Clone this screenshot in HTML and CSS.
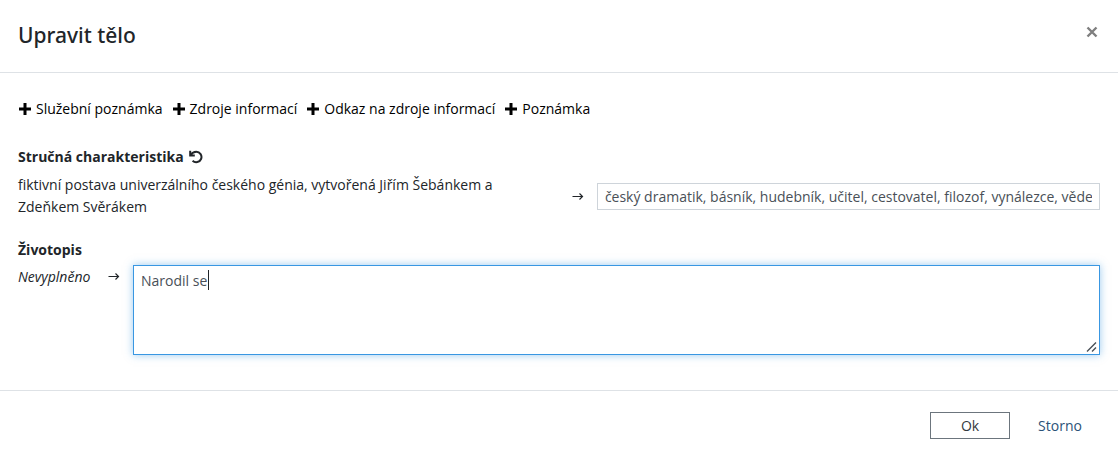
FILE: index.html
```html
<!DOCTYPE html>
<html lang="cs">
<head>
    <meta charset="UTF-8">
    <meta name="viewport" content="width=device-width, initial-scale=1.0">
    <title>Upravit tělo</title>
    <link rel="stylesheet" href="styles.css">
</head>
<body>
    <form class="dialog">
        <header class="dialog-header">
            <h1>Upravit tělo</h1>
            <button type="button" class="close" aria-label="Zavřít">
                <svg viewBox="0 0 12 12"><path d="M1.5 1.5l9 9M10.5 1.5l-9 9"/></svg>
            </button>
        </header>
        <div class="dialog-body">
            <div class="add-items">
                <button type="button" class="add"><svg viewBox="0 0 12 12"><path d="M6 0v12M0 6h12"/></svg>Služební poznámka</button>
                <button type="button" class="add"><svg viewBox="0 0 12 12"><path d="M6 0v12M0 6h12"/></svg>Zdroje informací</button>
                <button type="button" class="add"><svg viewBox="0 0 12 12"><path d="M6 0v12M0 6h12"/></svg>Odkaz na zdroje informací</button>
                <button type="button" class="add"><svg viewBox="0 0 12 12"><path d="M6 0v12M0 6h12"/></svg>Poznámka</button>
            </div>
            <div class="item">
                <div class="item-title">
                    <label for="brief">Stručná charakteristika</label>
                    <button type="button" class="undo" aria-label="Vrátit">
                        <svg viewBox="0 0 14 14"><path d="M1.2 .8v4.6h4.6"/><path d="M1.8 5C3 2.9 5 1.8 7.3 1.8a5.2 5.2 0 1 1-3.7 8.9"/></svg>
                    </button>
                </div>
                <div class="item-row center">
                    <p class="old-value">fiktivní postava univerzálního českého génia, vytvořená Jiřím Šebánkem a Zdeňkem Svěrákem</p>
                    <svg class="arrow" viewBox="0 0 12 10"><path d="M.5 5.5h10M7.5 2.5l3 3-3 3"/></svg>
                    <input type="text" id="brief" value="český dramatik, básník, hudebník, učitel, cestovatel, filozof, vynálezce, vědec">
                </div>
            </div>
            <div class="item">
                <div class="item-title">
                    <label for="bio">Životopis</label>
                </div>
                <div class="item-row">
                    <em>Nevyplněno</em>
                    <svg class="arrow" viewBox="0 0 12 10"><path d="M.5 5.5h10M7.5 2.5l3 3-3 3"/></svg>
                    <div class="editor">
                        <textarea id="bio" spellcheck="false">Narodil se</textarea>
                        <span class="caret"></span>
                        <svg class="grip" viewBox="0 0 12 12"><path d="M1 10.5L10 1.5M6 10.5L10 6.5"/></svg>
                    </div>
                </div>
            </div>
        </div>
        <footer class="dialog-footer">
            <button type="button" class="btn">Ok</button>
            <button type="button" class="btn btn-link">Storno</button>
        </footer>
    </form>
    <script>
        const bio = document.querySelector('#bio');
        bio.focus();
        bio.setSelectionRange(bio.value.length, bio.value.length);
    </script>
</body>
</html>
```

FILE: styles.css
```css
* { margin: 0; padding: 0; box-sizing: border-box; }
body {
    background-color: #fff;
    color: #212529;
    font-family: "Open Sans", "Noto Sans", sans-serif;
    font-size: 14px;
    line-height: 22px;
}
button, input, textarea {
    font: inherit;
    color: inherit;
}
button {
    background: none;
    border: 0;
    cursor: pointer;
}
svg {
    fill: none;
    stroke: currentColor;
    flex-shrink: 0;
}
.dialog-header {
    display: flex;
    justify-content: space-between;
    align-items: flex-start;
    padding: 20px 18px 22px;
    border-bottom: 1px solid #dee2e6;
}
.dialog-header h1 {
    font-family: "Noto Sans", "Open Sans", sans-serif;
    font-size: 21px;
    font-weight: 500;
    line-height: 30px;
}
.close {
    display: flex;
    padding: 6px 2px;
    color: #7f7f7f;
}
.close svg {
    width: 12px;
    height: 12px;
    stroke-width: 2.4;
}
.dialog-body {
    padding: 25px 18px 35px;
}
.add-items {
    display: flex;
    gap: 9px;
    color: #000;
}
.add {
    display: flex;
    align-items: center;
    gap: 5px;
    padding-left: 1px;
}
.add svg {
    width: 12px;
    height: 12px;
    stroke-width: 3;
}
.item {
    margin-top: 26px;
}
.item + .item {
    margin-top: 21px;
}
.item-title {
    display: flex;
    align-items: center;
    gap: 5px;
    margin-bottom: 6px;
    font-weight: 700;
}
.item + .item .item-title {
    margin-bottom: 4px;
}
.undo {
    display: flex;
}
.undo svg {
    width: 14px;
    height: 14px;
    stroke-width: 2;
}
.item-row {
    display: flex;
    align-items: flex-start;
}
.item-row.center {
    align-items: center;
}
.old-value {
    flex: 1;
    padding-right: 36px;
}
.arrow {
    width: 12px;
    height: 10px;
    margin: 0 13px;
    stroke-width: 1.2;
}
.item-row:not(.center) .arrow {
    margin-top: 6px;
}
.item-row em {
    min-width: 77px;
    margin-top: 1px;
}
input, textarea {
    border: 1px solid #ced4da;
    color: #495057;
    outline: none;
}
input {
    width: 46.5%;
    height: 27px;
    padding: 0 7px;
}
.editor {
    position: relative;
    display: flex;
    flex: 1;
}
textarea {
    flex: 1;
    height: 90px;
    padding: 4px 7px;
    resize: vertical;
    caret-color: transparent;
}
textarea::-webkit-resizer {
    background: transparent;
}
textarea:focus {
    border-color: #3997e2;
    box-shadow: 0 0 8px rgba(57, 151, 226, 0.5);
}
.caret {
    position: absolute;
    top: 5px;
    left: 75px;
    width: 1px;
    height: 20px;
    background-color: #212529;
}
.grip {
    position: absolute;
    right: 2px;
    bottom: 2px;
    width: 12px;
    height: 12px;
    color: #495057;
    stroke-width: 1.4;
    pointer-events: none;
}
.dialog-footer {
    display: flex;
    justify-content: flex-end;
    gap: 10px;
    padding: 21px 18px 18px;
    border-top: 1px solid #dee2e6;
}
.btn {
    width: 80px;
    height: 27px;
    border: 1px solid #6c757d;
    color: #343a40;
}
.btn-link {
    border-color: transparent;
    color: #2b5277;
}
```
